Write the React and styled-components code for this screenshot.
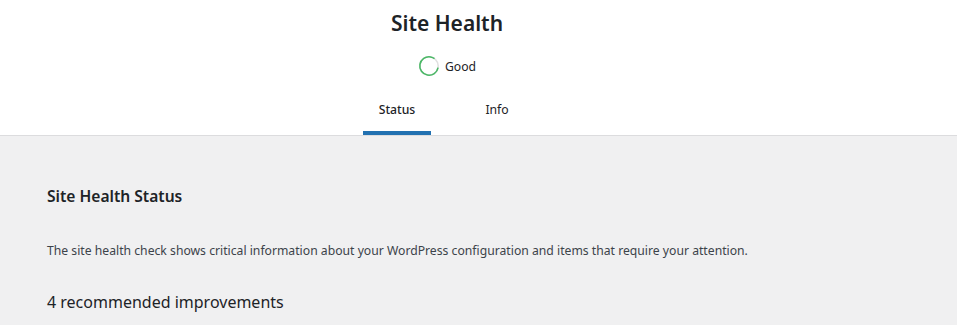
import React from "react";
import styled, { createGlobalStyle } from "styled-components";

const Global = createGlobalStyle`
  html, body { margin: 0; padding: 0; background: #f0f0f1; }
  body { font-family: "Noto Sans", "Open Sans", sans-serif; color: #1d2327; }
`;

const Header = styled.header`
  background: #fff;
  border-bottom: 1px solid #dcdcde;
  display: flex;
  flex-direction: column;
  align-items: center;
  padding-right: 63px;
`;

const Title = styled.h1`
  margin: 0;
  padding-top: 8px;
  font-size: 21px;
  line-height: 30px;
  font-weight: 600;
  color: #1d2327;
`;

const Score = styled.div`
  display: flex;
  align-items: center;
  gap: 5px;
  margin-top: 16px;
  height: 24px;
  font-size: 12.2px;
  color: #1d2327;
  font-weight: 400;
`;

const Tabs = styled.nav`
  display: grid;
  grid-template-columns: 100px 100px;
  margin-top: 17px;
`;

const Tab = styled.a`
  display: block;
  padding: 6px 0 16px;
  margin: 0 16px;
  text-align: center;
  font-size: 12.2px;
  line-height: 18px;
  color: #1d2327;
  font-weight: ${(p) => (p.$active ? 500 : 400)};
  text-decoration: none;
  box-shadow: ${(p) => (p.$active ? "inset 0 -4px #2271b1" : "none")};
`;

const Body = styled.main`
  padding: 48px 47px 0;
`;

const H2 = styled.h2`
  margin: 0;
  font-size: 15.6px;
  line-height: 24px;
  font-weight: 600;
  color: #1d2327;
`;

const P = styled.p`
  margin: 33px 0 0;
  font-size: 12.2px;
  line-height: 20px;
  color: #3c434a;
`;

const H3 = styled.h3`
  margin: 28px 0 0;
  font-size: 16px;
  line-height: 26px;
  font-weight: 400;
  color: #1d2327;
`;

function Ring() {
  const r = 9.2;
  const c = 2 * Math.PI * r;
  return (
    <svg width="22" height="22" viewBox="0 0 22 22">
      <circle cx="11" cy="11" r={r} fill="none" stroke="#e0e0e0" strokeWidth="1.6" />
      <circle
        cx="11"
        cy="11"
        r={r}
        fill="none"
        stroke="#4ab866"
        strokeWidth="1.6"
        strokeDasharray={`${c * 0.82} ${c}`}
        transform="rotate(10 11 11)"
      />
    </svg>
  );
}

export default function App() {
  return (
    <>
      <Global />
      <Header>
        <Title>Site Health</Title>
        <Score>
          <Ring />
          Good
        </Score>
        <Tabs>
          <Tab $active href="#">Status</Tab>
          <Tab href="#">Info</Tab>
        </Tabs>
      </Header>
      <Body>
        <H2>Site Health Status</H2>
        <P>
          The site health check shows critical information about your WordPress configuration and items that require your attention.
        </P>
        <H3>4 recommended improvements</H3>
      </Body>
    </>
  );
}
